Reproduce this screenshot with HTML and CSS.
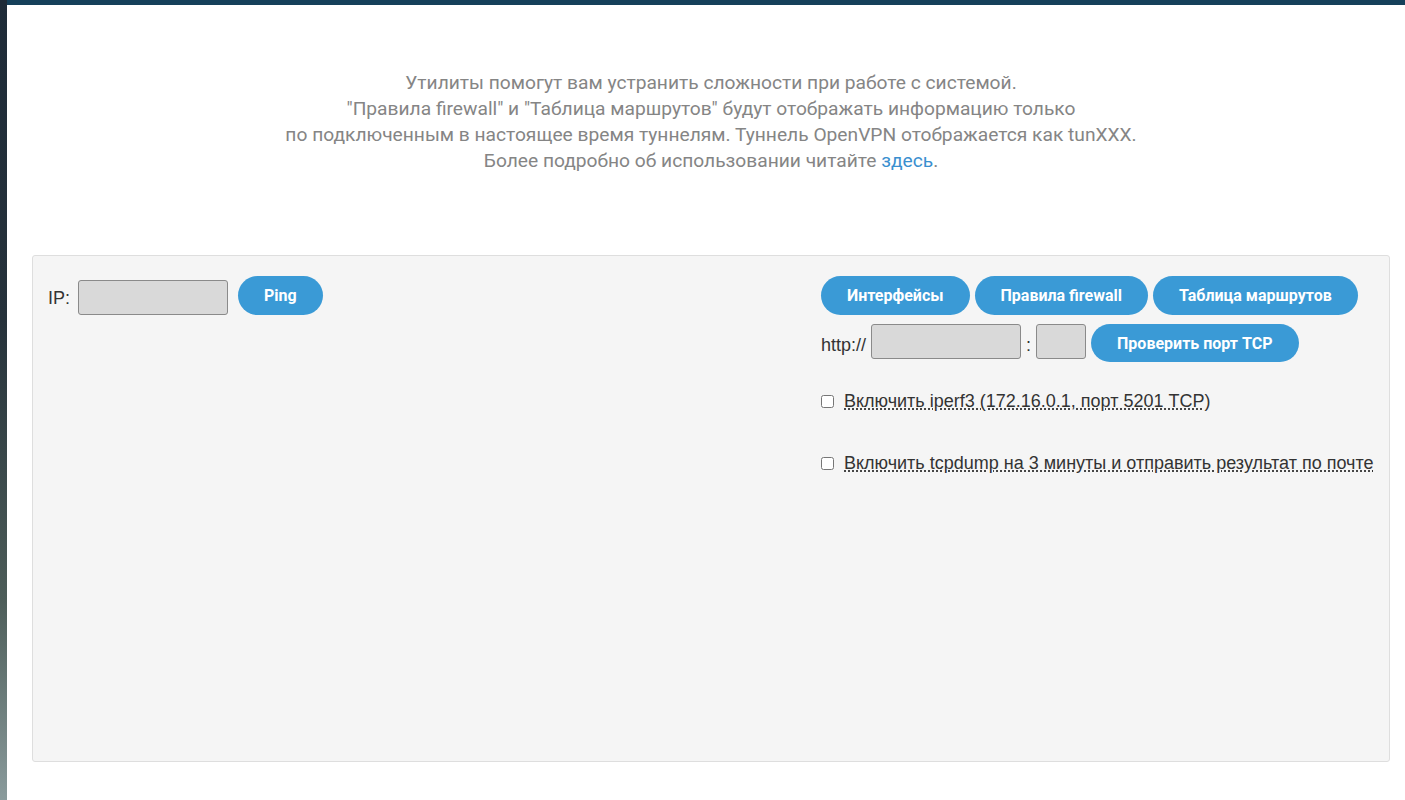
FILE: index.html
```html
<!DOCTYPE html>
<html lang="ru">
<head>
  <meta charset="UTF-8">
  <title>Утилиты</title>
  <link rel="stylesheet" href="styles.css">
</head>
<body>
  <div class="page">
    <div class="side"></div>
    <div class="main">
      <div class="topbar"></div>
      <div class="content">
        <p class="intro">
          Утилиты помогут вам устранить сложности при работе с системой.<br>
          "Правила firewall" и "Таблица маршрутов" будут отображать информацию только<br>
          по подключенным в настоящее время туннелям. Туннель OpenVPN отображается как tunXXX.<br>
          Более подробно об использовании читайте <a href="#">здесь</a>.
        </p>
        <div class="panel">
          <div class="col-left">
            <div class="row ping-row">
              <label class="lbl">IP:</label>
              <input type="text" class="field field-ip">
              <button class="btn">Ping</button>
            </div>
          </div>
          <div class="col-right">
            <div class="row">
              <button class="btn">Интерфейсы</button>
              <button class="btn">Правила firewall</button>
              <button class="btn">Таблица маршрутов</button>
            </div>
            <div class="row port-row">
              <span class="lbl">http://</span>
              <input type="text" class="field field-host">
              <span class="lbl colon">:</span>
              <input type="text" class="field field-port">
              <button class="btn">Проверить порт TCP</button>
            </div>
            <label class="check">
              <input type="checkbox">
              <span class="hint">Включить iperf3 (172.16.0.1, порт 5201 TCP)</span>
            </label>
            <label class="check">
              <input type="checkbox">
              <span class="hint">Включить tcpdump на 3 минуты и отправить результат по почте</span>
            </label>
          </div>
        </div>
      </div>
    </div>
  </div>
</body>
</html>
```

FILE: styles.css
```css
html, body {
  margin: 0;
  height: 100%;
  background: #fff;
}
.page {
  display: flex;
  min-height: 800px;
}
.side {
  width: 7px;
  flex: none;
  background: linear-gradient(180deg, #1e2b38 0%, #26323b 40%, #4d5d59 75%, #8a9b9c 100%);
}
.main {
  flex: 1;
}
.topbar {
  height: 5px;
  background: #15405a;
}
.content {
  padding: 0 15px 0 25px;
}
.intro {
  margin: 0;
  padding-top: 65px;
  text-align: center;
  font-family: Roboto, "Liberation Sans", sans-serif;
  font-size: 19.2px;
  line-height: 26px;
  color: #858585;
}
.intro a {
  color: #3a8fcf;
  text-decoration: none;
}
.panel {
  margin-top: 81px;
  height: 465px;
  padding: 20px 15px;
  background: #f5f5f5;
  border: 1px solid #dedede;
  border-radius: 3px;
  display: flex;
  font-family: "Liberation Sans", Arial, sans-serif;
  font-size: 18px;
  color: #333;
}
.col-left {
  flex: 1;
}
.col-right {
  width: 553px;
}
.row {
  display: flex;
  align-items: flex-start;
  gap: 5px;
}
.ping-row {
  align-items: center;
}
.lbl {
  line-height: 20px;
}
.ping-row .lbl {
  margin-top: 4px;
  margin-right: 3px;
}
.port-row {
  margin-top: 9px;
}
.port-row .lbl {
  padding-top: 11px;
}
.field {
  box-sizing: border-box;
  height: 35px;
  background: #d9d9d9;
  border: 1px solid #8a8a8a;
  border-radius: 3px;
  padding: 0 6px;
  font-size: 14px;
}
.field-ip {
  width: 150px;
  margin-top: 4px;
  margin-right: 5px;
}
.field-host {
  width: 150px;
}
.field-port {
  width: 50px;
}
.btn {
  height: 39px;
  padding: 0 26px;
  border: none;
  border-radius: 20px;
  background: #3a9ad6;
  color: #fff;
  font-family: Roboto, "Liberation Sans", sans-serif;
  font-weight: bold;
  font-size: 16px;
  cursor: pointer;
}
.port-row .btn {
  height: 38px;
}
.check {
  display: flex;
  align-items: center;
  gap: 10px;
  margin-top: 29px;
}
.check + .check {
  margin-top: 42px;
}
.check input {
  margin: 0;
  width: 13px;
  height: 13px;
}
.hint {
  line-height: 20px;
  text-decoration: underline dotted #333;
  text-underline-offset: 2px;
}
```
